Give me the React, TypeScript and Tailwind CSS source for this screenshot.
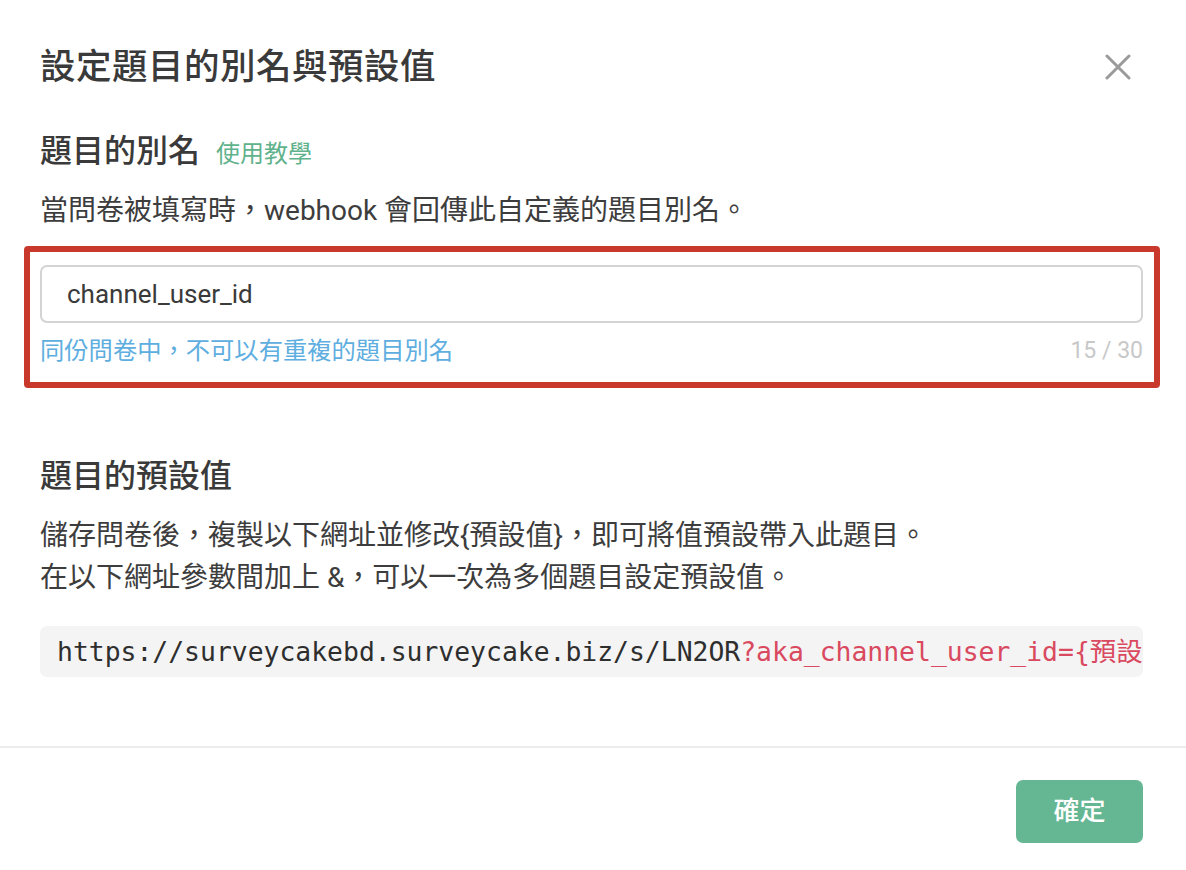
import React from "react";

const FONT = 'Roboto, "Noto Sans CJK TC", "Noto Sans CJK SC", sans-serif';

export default function App() {
  return (
    <div
      className="w-[1186px] h-[870px] bg-white relative overflow-hidden text-[#3b3b3b]"
      style={{ fontFamily: FONT }}
    >
      <div className="pl-[40px] pr-[43px]">
        {/* Title row */}
        <div className="flex items-center justify-between pt-[42px] h-[92px]">
          <h1 className="text-[35.5px] leading-[50px] font-medium text-[#3a3a3a] tracking-[0.5px]">
            設定題目的別名與預設值
          </h1>
          <button className="mr-[12px] w-[26px] h-[26px] flex items-center justify-center">
            <svg width="26" height="26" viewBox="0 0 26 26" fill="none">
              <path d="M2 2 L24 24 M24 2 L2 24" stroke="#9a9a9a" strokeWidth="3" strokeLinecap="round" />
            </svg>
          </button>
        </div>

        {/* Alias section */}
        <div className="mt-[37px] flex items-baseline h-[44px]">
          <h2 className="text-[32px] leading-[44px] font-medium text-[#3a3a3a]">題目的別名</h2>
          <span className="ml-[16px] text-[24px] leading-[44px] text-[#5fb28c]">使用教學</span>
        </div>
        <p className="mt-[20px] text-[28px] leading-[36px] text-[#3d3d3d]">
          當問卷被填寫時，webhook 會回傳此自定義的題目別名。
        </p>

        <div className="relative mt-[36px]">
          <div className="h-[58px] rounded-[7px] border-[2px] border-[#d4d4d4] flex items-center pl-[25px]">
            <span className="text-[26px] text-[#3a3a3a]">channel_user_id</span>
          </div>
          <div className="mt-[12px] flex justify-between items-center h-[32px]">
            <span className="text-[24.3px] text-[#5eaee0]">同份問卷中，不可以有重複的題目別名</span>
            <span className="text-[23px] text-[#c8c8c8]">15 / 30</span>
          </div>
          {/* red highlight annotation */}
          <div className="absolute left-[-16px] right-[-17px] top-[-19px] bottom-[-21px] border-[6px] border-[#c8392b] rounded-[4px] pointer-events-none" />
        </div>

        {/* Default value section */}
        <h2 className="mt-[87px] text-[32px] leading-[44px] font-medium text-[#3a3a3a]">題目的預設值</h2>
        <div className="mt-[17px] text-[28px] leading-[42px] text-[#3d3d3d]">
          <p>儲存問卷後，複製以下網址並修改{"{預設值}"}，即可將值預設帶入此題目。</p>
          <p>在以下網址參數間加上 &amp;，可以一次為多個題目設定預設值。</p>
        </div>

        <div
          className="mt-[27px] h-[51px] rounded-[7px] bg-[#f4f4f4] overflow-hidden whitespace-nowrap flex items-center pl-[17px] text-[26.4px]"
          style={{ fontFamily: '"DejaVu Sans Mono", "Noto Sans CJK TC", monospace' }}
        >
          <span className="text-[#2e2e2e]">https://surveycakebd.surveycake.biz/s/LN2OR</span>
          <span className="text-[#d9495f]">?aka_channel_user_id={"{預設值}"}</span>
        </div>
      </div>

      <div className="mt-[69px] h-[2px] bg-[#ececec]" />

      <div className="flex justify-end pr-[43px] pt-[32px]">
        <button className="w-[127px] h-[63px] rounded-[7px] bg-[#65b794] text-white text-[26px] font-medium">
          確定
        </button>
      </div>
    </div>
  );
}
